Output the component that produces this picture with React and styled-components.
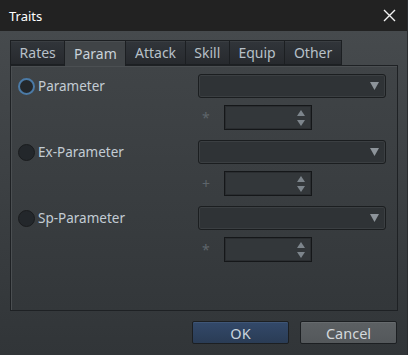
import styled, { createGlobalStyle } from "styled-components"

const Global = createGlobalStyle`
  html, body {
    margin: 0;
    padding: 0;
    background: #333;
  }
  * {
    box-sizing: border-box;
  }
`

const tabs = ["Rates", "Param", "Attack", "Skill", "Equip", "Other"]

const groups = [
  { label: "Parameter", sign: "*", checked: true },
  { label: "Ex-Parameter", sign: "+", checked: false },
  { label: "Sp-Parameter", sign: "*", checked: false },
]

const Traits = () => {
  return (
    <>
      <Global />
      <Window>
        <TitleBar>
          <span>Traits</span>
          <svg width="13" height="13" viewBox="0 0 13 13">
            <path d="M1 1 L12 12 M12 1 L1 12" stroke="#f2f2f2" strokeWidth="1.4" />
          </svg>
        </TitleBar>
        <Body>
          <TabBar>
            {tabs.map((t) => (
              <Tab key={t} $active={t === "Param"}>
                {t}
              </Tab>
            ))}
          </TabBar>
          <Panel>
            {groups.map((g) => (
              <Group key={g.label}>
                <RadioLabel>
                  <Radio $checked={g.checked} />
                  {g.label}
                </RadioLabel>
                <Combo>
                  <svg width="9" height="8" viewBox="0 0 9 8">
                    <path d="M0 0 H9 L4.5 8 Z" fill="#8d949a" />
                  </svg>
                </Combo>
                <Sign>{g.sign}</Sign>
                <Spin>
                  <SpinArrows>
                    <svg width="8" height="6" viewBox="0 0 8 6">
                      <path d="M0 6 H8 L4 0 Z" fill="#7d858c" />
                    </svg>
                    <svg width="8" height="6" viewBox="0 0 8 6">
                      <path d="M0 0 H8 L4 6 Z" fill="#7d858c" />
                    </svg>
                  </SpinArrows>
                </Spin>
              </Group>
            ))}
          </Panel>
          <Footer>
            <Button $primary>OK</Button>
            <Button>Cancel</Button>
          </Footer>
        </Body>
      </Window>
    </>
  )
}

export default Traits

const Window = styled.div`
  width: 408px;
  height: 355px;
  display: flex;
  flex-direction: column;
  font-family: "Noto Sans", "Open Sans", sans-serif;
  border-right: 1px solid #2a2d30;
`
const TitleBar = styled.div`
  height: 31px;
  flex: none;
  background: #222222;
  color: #ffffff;
  font-size: 13px;
  display: flex;
  align-items: center;
  justify-content: space-between;
  padding: 0 11px 0 9px;
`
const Body = styled.div`
  flex: 1;
  background: linear-gradient(#464a4d, #313538);
  padding: 9px 9px 0 10px;
  display: flex;
  flex-direction: column;
`
const TabBar = styled.div`
  display: flex;
  height: 25px;
  position: relative;
  z-index: 1;
`
const Tab = styled.div`
  height: ${(p) => (p.$active ? "26px" : "25px")};
  padding: 0 8.6px 1px;
  margin-right: -1px;
  display: flex;
  align-items: center;
  font-size: 14px;
  color: ${(p) => (p.$active ? "#c9d2da" : "#b7c0c8")};
  border: 1px solid #1c1f22;
  border-bottom: ${(p) => (p.$active ? "none" : "1px solid #1c1f22")};
  background: ${(p) =>
    p.$active ? "#404447" : "linear-gradient(#31353a, #272a2e)"};
  box-shadow: inset 0 1px 0 ${(p) => (p.$active ? "#4a4e51" : "#3a3e42")};
`
const Panel = styled.div`
  height: 246px;
  border: 1px solid #1e2124;
  box-shadow: inset 1px 1px 0 #4b4f52;
  background: linear-gradient(#404447, #33373a);
  padding: 8px 11px 0 7px;
  display: flex;
  flex-direction: column;
  gap: 10px;
`
const Group = styled.div`
  display: grid;
  grid-template-columns: 180px 26px 88px 1fr;
  grid-template-rows: 24px 25px;
  row-gap: 7px;
  align-items: center;
`
const RadioLabel = styled.div`
  display: flex;
  align-items: center;
  gap: 3px;
  font-size: 13.5px;
  color: #c3ccd4;
`
const Radio = styled.span`
  width: 17px;
  height: 17px;
  border-radius: 50%;
  background: #23272b;
  border: ${(p) => (p.$checked ? "2px solid #4b7aa6" : "1px solid #1a1c1e")};
`
const Combo = styled.div`
  grid-column: 2 / 5;
  height: 24px;
  border: 1px solid #1b1e20;
  border-radius: 3px;
  background: #2f3336;
  box-shadow: inset 0 0 0 1px #3b3f42;
  display: flex;
  align-items: center;
  justify-content: flex-end;
  padding-right: 6px;
`
const Sign = styled.div`
  grid-column: 2;
  grid-row: 2;
  padding-left: 4px;
  font-size: 14px;
  color: #5e656b;
`
const Spin = styled.div`
  grid-column: 3;
  grid-row: 2;
  height: 25px;
  border: 1px solid #151719;
  background: #33373a;
  box-shadow: inset 0 0 0 1px #2a2d30;
  display: flex;
  justify-content: flex-end;
  padding-right: 6px;
`
const SpinArrows = styled.div`
  display: flex;
  flex-direction: column;
  justify-content: center;
  gap: 4px;
`
const Footer = styled.div`
  display: flex;
  justify-content: flex-end;
  gap: 11px;
  padding: 10px 1px 0 0;
`
const Button = styled.div`
  width: 97px;
  height: 23px;
  border: 1px solid #1c1f22;
  border-radius: 2px;
  display: flex;
  align-items: center;
  justify-content: center;
  font-size: 14.5px;
  color: ${(p) => (p.$primary ? "#c9d3dd" : "#d3d8dc")};
  background: ${(p) =>
    p.$primary ? "linear-gradient(#33496a, #2a3c55)" : "linear-gradient(#5c6063, #54585b)"};
  box-shadow: inset 0 1px 0 ${(p) => (p.$primary ? "#3f5677" : "#676b6e")};
`
